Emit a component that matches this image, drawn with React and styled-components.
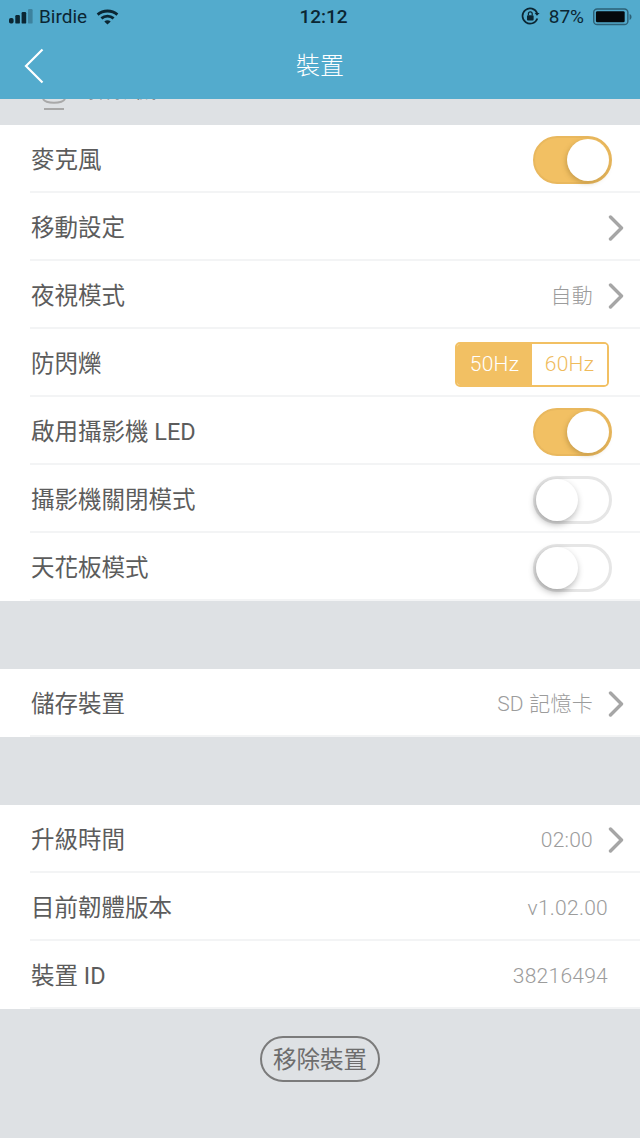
import React from 'react';
import styled, { createGlobalStyle } from 'styled-components';

const Global = createGlobalStyle`
  html, body { margin: 0; padding: 0; background: #dee1e4; }
  body { font-family: "Roboto", "Noto Sans CJK TC", sans-serif; }
`;

const Page = styled.div`
  width: 640px;
  height: 1138px;
  overflow: hidden;
  display: flex;
  flex-direction: column;
  background: #dee1e4;
`;

const Header = styled.header`
  height: 99px;
  flex: none;
  background: #53abcd;
  display: flex;
  flex-direction: column;
`;

const StatusBar = styled.div`
  height: 33px;
  padding: 0 8px 0 9px;
  display: grid;
  grid-template-columns: 1fr auto 1fr;
  align-items: center;
  color: #0b2633;
  font-size: 19px;
`;

const StatusLeft = styled.div`
  display: flex;
  align-items: center;
  gap: 6px;
`;

const BirdieName = styled.span`
  margin-right: 3px;
`;

const StatusRight = styled.div`
  display: flex;
  align-items: center;
  justify-content: flex-end;
  gap: 9px;
`;

const Clock = styled.div`
  font-weight: 500;
  font-size: 19px;
  padding-left: 6px;
`;

const NavBar = styled.div`
  height: 66px;
  display: grid;
  grid-template-columns: 1fr auto 1fr;
  align-items: center;
  padding: 0 24px;
  color: #fff;
`;

const NavTitle = styled.div`
  font-size: 24px;
  font-weight: 300;
  line-height: 1;
`;

const Peek = styled.div`
  height: 26px;
  flex: none;
  overflow: hidden;
  padding-left: 40px;
  display: flex;
  gap: 19px;
  align-items: flex-start;
`;

const PeekIcon = styled.svg`
  width: 29px;
  height: 12px;
  flex: none;
`;

const PeekLabel = styled.div`
  margin-top: -22px;
  font-size: 23px;
  line-height: 26px;
  color: #666;
`;

const Section = styled.section`
  background: #fff;
  display: flex;
  flex-direction: column;
`;

const Spacer = styled.div`
  height: 68px;
  flex: none;
`;

const Row = styled.div`
  height: 68px;
  box-sizing: border-box;
  margin-left: 30px;
  padding: 4px 16px 0 0;
  border-bottom: 2px solid #f3f4f5;
  display: flex;
  align-items: center;
  justify-content: space-between;
`;

const Label = styled.div`
  font-size: 23.5px;
  color: #5c5c5c;
  line-height: 1;
  margin: 2px 0 0 1px;
`;

const Right = styled.div`
  display: flex;
  align-items: center;
  gap: 15px;
`;

const Value = styled.div`
  font-size: 21px;
  font-weight: 300;
  letter-spacing: 0.25px;
  color: #9c9c9c;
  line-height: 1;
  margin-top: 1px;
  margin-right: ${p => (p.$plain ? '16px' : '0')};
`;

const Track = styled.div`
  width: 79px;
  height: 48px;
  box-sizing: border-box;
  border-radius: 24px;
  margin-right: 12px;
  position: relative;
  background: ${p => (p.$on ? '#f2c063' : '#fff')};
  border: ${p => (p.$on ? '2px solid #e9b85e' : '3px solid #e6e6e6')};
`;

const Knob = styled.div`
  position: absolute;
  top: ${p => (p.$on ? '1px' : '0')};
  ${p => (p.$on ? 'right: 1px;' : 'left: 0;')}
  width: 42px;
  height: 42px;
  border-radius: 50%;
  background: #fff;
  box-shadow: ${p => (p.$on ? '-1px 2px 5px rgba(120,90,30,0.35)' : '-1px 3px 7px rgba(0,0,0,0.3)')};
`;

const Segment = styled.div`
  display: flex;
  width: 154px;
  height: 45px;
  box-sizing: border-box;
  border: 2px solid #f2c063;
  border-radius: 5px;
  overflow: hidden;
  margin-right: 15px;
`;

const SegmentItem = styled.div`
  flex: 1;
  display: flex;
  align-items: center;
  justify-content: center;
  font-size: 21px;
  font-weight: 300;
  letter-spacing: 0.3px;
  background: ${p => (p.$active ? '#f2c063' : '#fff')};
  color: ${p => (p.$active ? '#fff' : '#efbb5c')};
`;

const Footer = styled.div`
  display: flex;
  justify-content: center;
  padding-top: 27px;
`;

const RemoveButton = styled.button`
  width: 120px;
  height: 46px;
  padding: 0 0 3px;
  border: 2px solid #7b7b7b;
  border-radius: 23px;
  background: transparent;
  font: inherit;
  font-size: 23.5px;
  color: #6d6d6d;
`;

const Chevron = () => (
  <svg width="16" height="26" viewBox="0 0 16 26" fill="none" stroke="#a6a6a6" strokeWidth="3.4" strokeLinecap="round" strokeLinejoin="round">
    <path d="M2.5 2 13.5 13 2.5 24" />
  </svg>
);

const Toggle = ({ on }) => (
  <Track $on={on}><Knob $on={on} /></Track>
);

const Signal = () => (
  <svg width="24" height="15" viewBox="0 0 24 15" fill="#0b2633">
    <rect x="0" y="9" width="4.6" height="5.6" rx="1.8" />
    <rect x="6.300" y="6" width="4.6" height="8.6" rx="1.2" />
    <rect x="12.600" y="3" width="4.6" height="11.6" rx="1.2" />
    <rect x="19" y="0" width="4.6" height="14.600" rx="1.2" opacity="0.3" />
  </svg>
);

const Wifi = () => (
  <svg width="23" height="16" viewBox="0 0 24 17" fill="none" stroke="#0b2633" strokeWidth="3">
    <path d="M1.500 6C7.500 .8 16.500 .8 22.500 6" />
    <path d="M5.500 10C9.300 6.800 14.700 6.800 18.500 10" />
    <path d="M12 16.500 8.600 13.200C10.600 11.600 13.400 11.600 15.400 13.200Z" fill="#0b2633" stroke="none" />
  </svg>
);

const RotationLock = () => (
  <svg width="19" height="19" viewBox="0 0 20 20" fill="none" stroke="#0b2633" strokeWidth="1.8">
    <path d="M17.200 12A8 8 0 1 1 17 6.500" />
    <path d="M19.600 6.200 16.800 9.200 14.400 6.200Z" fill="#0b2633" stroke="none" />
    <rect x="6.300" y="8.600" width="7" height="5.600" rx="1" fill="#0b2633" stroke="none" />
    <path d="M7.800 8.600V7.200a2 2 0 0 1 4 0V8.600" strokeWidth="1.300" />
  </svg>
);

const Battery = () => (
  <svg width="39" height="18" viewBox="0 0 40 18">
    <rect x="0.750" y="0.750" width="35" height="16" rx="3.500" fill="none" stroke="#2d6076" strokeWidth="1.500" />
    <rect x="3" y="3" width="29.500" height="11.500" rx="1.500" fill="#05090c" />
    <path d="M37.500 6v6c1.200-.4 2-1.600 2-3s-.8-2.600-2-3Z" fill="#2d6076" />
  </svg>
);

const rows1 = [
  { label: '麥克風', toggle: true },
  { label: '移動設定', chevron: true },
  { label: '夜視模式', value: '自動', chevron: true },
  { label: '防閃爍', segment: true },
  { label: '啟用攝影機 LED', toggle: true },
  { label: '攝影機關閉模式', toggle: false },
  { label: '天花板模式', toggle: false },
];

const rows2 = [{ label: '儲存裝置', value: 'SD 記憶卡', chevron: true }];

const rows3 = [
  { label: '升級時間', value: '02:00', chevron: true },
  { label: '目前韌體版本', value: 'v1.02.00', plain: true },
  { label: '裝置 ID', value: '38216494', plain: true },
];

const SettingRow = ({ row }) => (
  <Row>
    <Label>{row.label}</Label>
    <Right>
      {row.value && <Value $plain={row.plain}>{row.value}</Value>}
      {row.chevron && <Chevron />}
      {row.toggle !== undefined && <Toggle on={row.toggle} />}
      {row.segment && (
        <Segment>
          <SegmentItem $active>50Hz</SegmentItem>
          <SegmentItem>60Hz</SegmentItem>
        </Segment>
      )}
    </Right>
  </Row>
);

export default function App() {
  return (
    <Page>
      <Global />
      <Header>
        <StatusBar>
          <StatusLeft><Signal /><BirdieName>Birdie</BirdieName><Wifi /></StatusLeft>
          <Clock>12:12</Clock>
          <StatusRight><RotationLock /><span>87%</span><Battery /></StatusRight>
        </StatusBar>
        <NavBar>
          <svg width="20" height="36" viewBox="0 0 20 36" fill="none" stroke="#fff" strokeWidth="2.2">
            <path d="M18.500 1.500 2 18 18.500 34.500" />
          </svg>
          <NavTitle>裝置</NavTitle>
          <span />
        </NavBar>
      </Header>
      <Peek>
        <PeekIcon viewBox="0 0 29 12" fill="none" stroke="#a8a8a8" strokeWidth="2">
          <path d="M3 0C6 5 22 5 25 0" />
          <path d="M4 10H24" />
        </PeekIcon>
        <PeekLabel>攝影機</PeekLabel>
      </Peek>
      <Section>{rows1.map(r => <SettingRow key={r.label} row={r} />)}</Section>
      <Spacer />
      <Section>{rows2.map(r => <SettingRow key={r.label} row={r} />)}</Section>
      <Spacer />
      <Section>{rows3.map(r => <SettingRow key={r.label} row={r} />)}</Section>
      <Footer><RemoveButton>移除裝置</RemoveButton></Footer>
    </Page>
  );
}
